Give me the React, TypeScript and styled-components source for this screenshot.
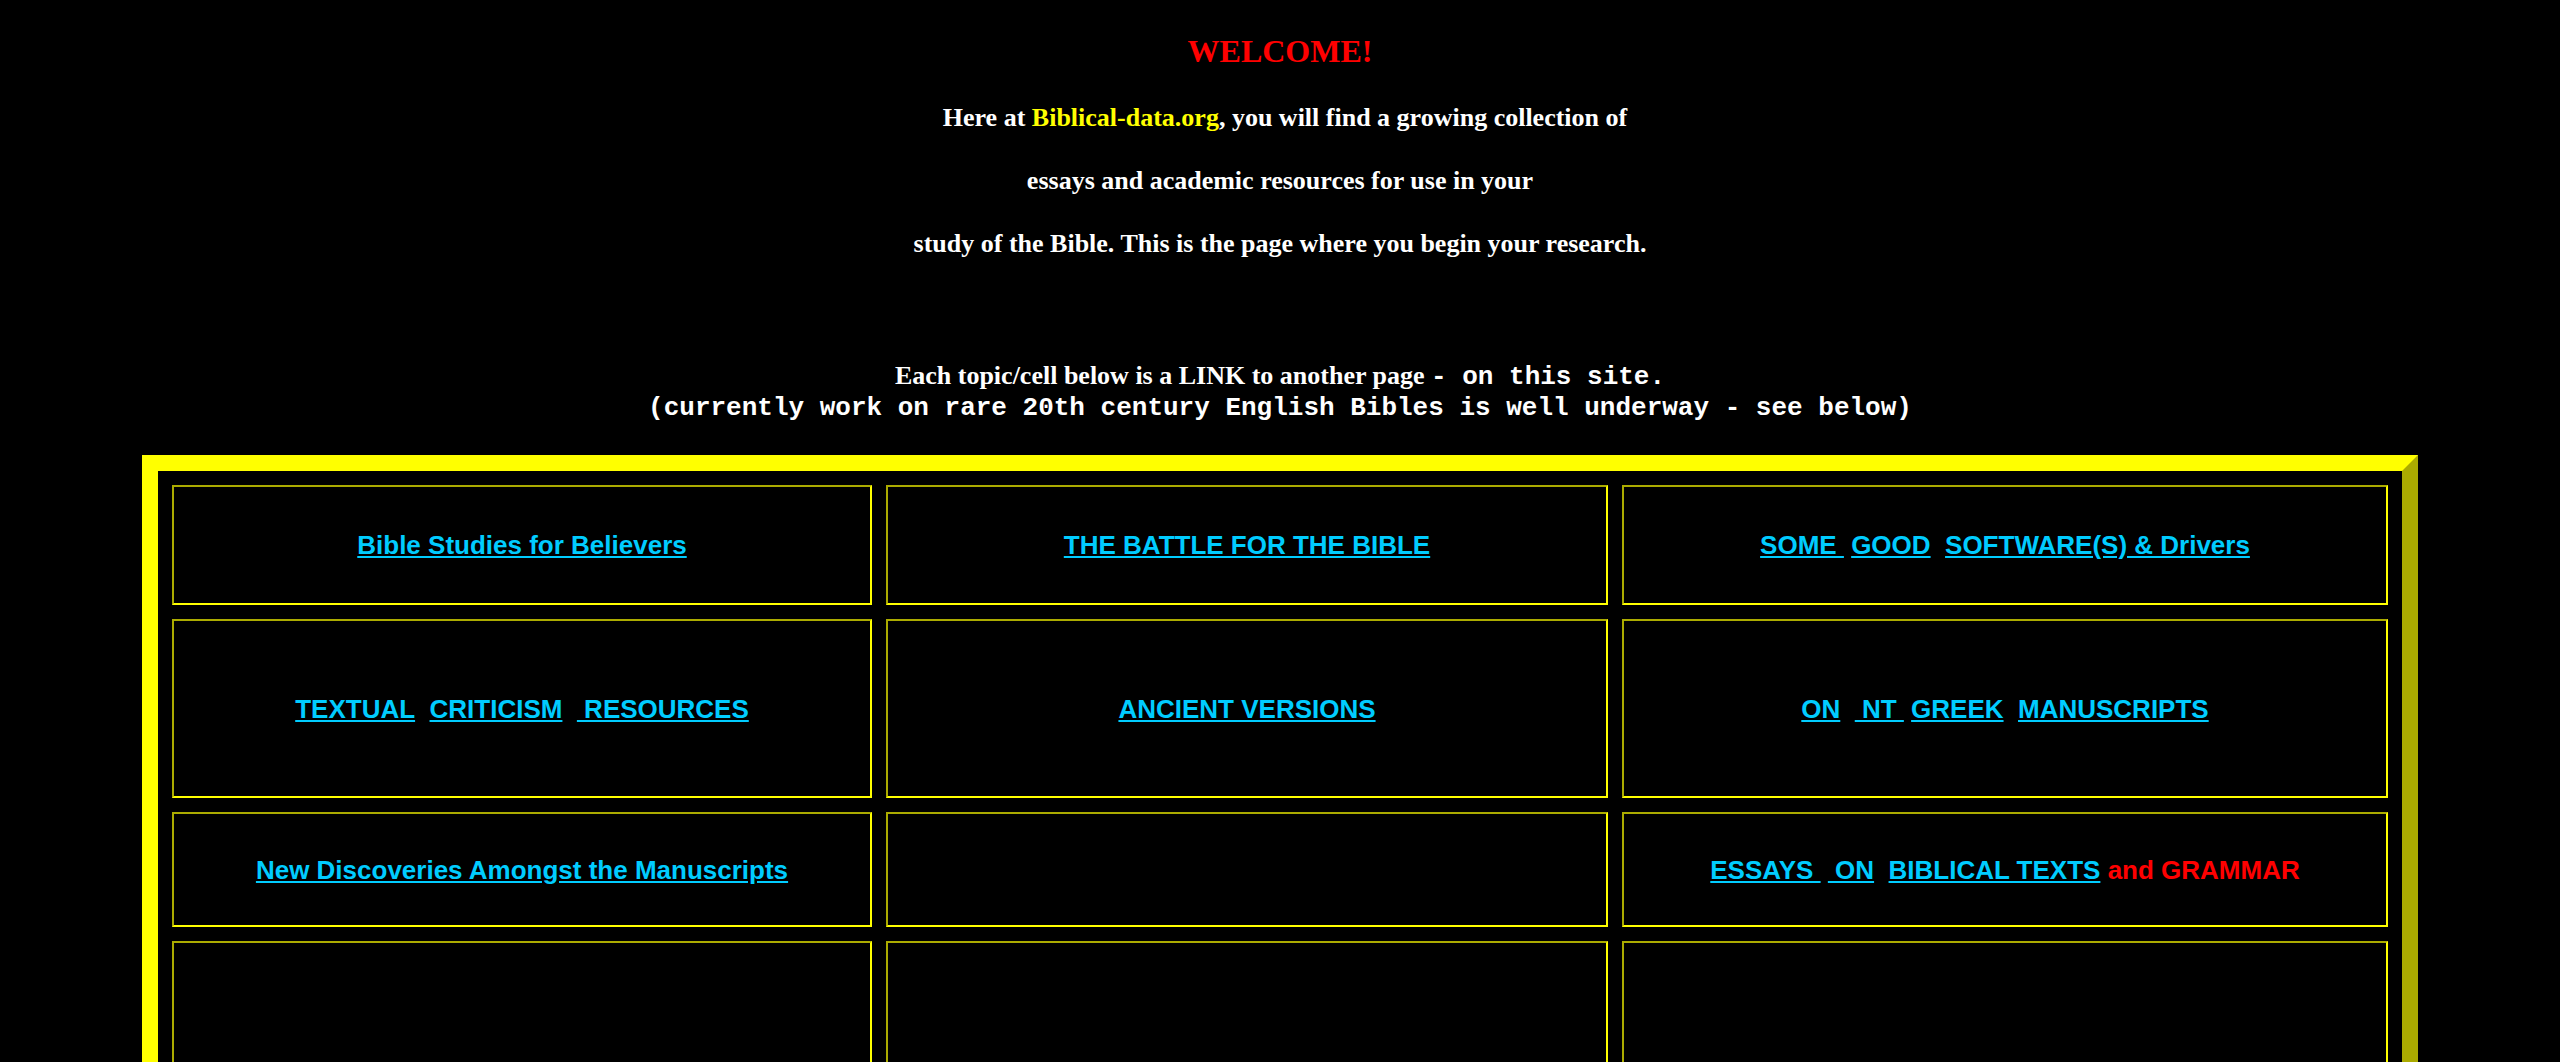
import React from "react";
import styled, { createGlobalStyle } from "styled-components";

const GlobalStyle = createGlobalStyle`
  html, body {
    margin: 0;
    padding: 0;
    background: #000000;
  }
  body {
    font-family: "Liberation Serif", "Times New Roman", serif;
    color: #ffffff;
  }
`;

const Page = styled.div`
  padding-top: 33px;
  padding-bottom: 40px;
  text-align: center;
`;

const Welcome = styled.h1`
  margin: 0;
  font-family: "Liberation Serif", "Times New Roman", serif;
  font-size: 32px;
  font-weight: bold;
  line-height: 36px;
  color: #ff0000;
`;

const Intro = styled.div`
  margin-top: 17px;
  font-family: "Liberation Serif", "Times New Roman", serif;
  font-size: 26px;
  font-weight: bold;
  color: #ffffff;
`;

const IntroLine = styled.div<{ $indent?: number }>`
  line-height: 63px;
  padding-left: ${(p) => p.$indent ?? 0}px;
`;

const SiteName = styled.span`
  color: #ffff00;
`;

const Notice = styled.div`
  margin-top: 86px;
  font-family: "Liberation Serif", "Times New Roman", serif;
  font-size: 26px;
  font-weight: bold;
  line-height: 30px;
  color: #ffffff;
`;

const Mono = styled.span`
  font-family: "Liberation Mono", "Courier New", monospace;
  font-weight: bold;
`;

const Board = styled.div`
  box-sizing: border-box;
  width: 2276px;
  margin: 32px auto 0;
  border-width: 16px;
  border-style: solid;
  border-color: #ffff00 #abab00 #abab00 #ffff00;
  padding: 14px;
  display: grid;
  grid-template-columns: 700px 722px 766px;
  grid-template-rows: 120px 179px 115px 180px;
  gap: 14px;
`;

const Cell = styled.div`
  box-sizing: border-box;
  border-width: 2px;
  border-style: solid;
  border-color: #abab00 #ffff00 #ffff00 #abab00;
  display: flex;
  align-items: center;
  justify-content: center;
`;

const Label = styled.span`
  display: block;
  text-align: center;
  font-family: "Liberation Sans", Arial, sans-serif;
  font-size: 26px;
  font-weight: bold;
  line-height: 30px;
  white-space: pre;
`;

const TopicLink = styled.a`
  color: #00ccff;
  text-decoration: underline;
  cursor: pointer;
`;

const Accent = styled.span`
  color: #ff0000;
`;

const NB = "\u00a0";

export default function App() {
  return (
    <>
      <GlobalStyle />
      <Page>
        <Welcome>WELCOME!</Welcome>
        <Intro>
          <IntroLine $indent={10}>
            Here at <SiteName>Biblical-data.org</SiteName>, you will find a growing collection of
          </IntroLine>
          <IntroLine>essays and academic resources for use in your</IntroLine>
          <IntroLine>study of the Bible. This is the page where you begin your research.</IntroLine>
        </Intro>
        <Notice>
          Each topic/cell below is a LINK to another page <Mono>- on this site.</Mono>
          <br />
          <Mono>(currently work on rare 20th century English Bibles is well underway - see below)</Mono>
        </Notice>
        <Board>
          <Cell>
            <Label>
              <TopicLink>Bible Studies for Believers</TopicLink>
            </Label>
          </Cell>
          <Cell>
            <Label>
              <TopicLink>THE BATTLE FOR THE BIBLE</TopicLink>
            </Label>
          </Cell>
          <Cell>
            <Label>
              <TopicLink>{`SOME${NB}`}</TopicLink>{" "}
              <TopicLink>GOOD</TopicLink>
              {`${NB} `}
              <TopicLink>SOFTWARE(S) &amp; Drivers</TopicLink>
            </Label>
          </Cell>

          <Cell>
            <Label>
              <TopicLink>TEXTUAL</TopicLink>
              {`${NB} `}
              <TopicLink>CRITICISM</TopicLink>
              {`${NB} `}
              <TopicLink>{`${NB}RESOURCES`}</TopicLink>
            </Label>
          </Cell>
          <Cell>
            <Label>
              <TopicLink>ANCIENT VERSIONS</TopicLink>
            </Label>
          </Cell>
          <Cell>
            <Label>
              <TopicLink>ON</TopicLink>
              {`${NB} `}
              <TopicLink>{`${NB}NT${NB}`}</TopicLink>{" "}
              <TopicLink>GREEK</TopicLink>
              {`${NB} `}
              <TopicLink>MANUSCRIPTS</TopicLink>
            </Label>
          </Cell>

          <Cell>
            <Label>
              <TopicLink>New Discoveries Amongst the Manuscripts</TopicLink>
            </Label>
          </Cell>
          <Cell />
          <Cell>
            <Label>
              <TopicLink>{`ESSAYS${NB}`}</TopicLink>{" "}
              <TopicLink>{`${NB}ON`}</TopicLink>
              {`${NB} `}
              <TopicLink>BIBLICAL TEXTS</TopicLink>{" "}
              <Accent>and GRAMMAR</Accent>
            </Label>
          </Cell>

          <Cell />
          <Cell />
          <Cell />
        </Board>
      </Page>
    </>
  );
}
